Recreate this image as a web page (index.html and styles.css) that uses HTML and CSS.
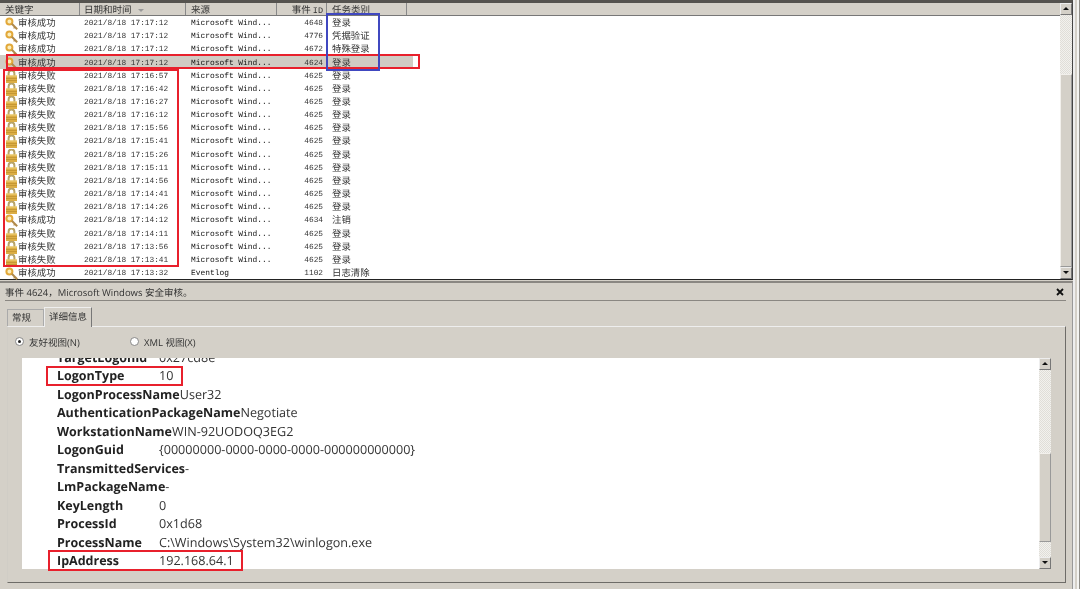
FILE: index.html
```html
<!DOCTYPE html>
<html lang="zh">
<head>
<meta charset="utf-8">
<title>事件查看器</title>
<link rel="stylesheet" href="styles.css">
</head>
<body>
<svg width="0" height="0" class="defs">
  <symbol id="key" viewBox="0 0 13 13">
    <circle cx="4.4" cy="4.4" r="3" fill="#fbeebc" stroke="#e2a83a" stroke-width="2"/>
    <path d="M6.8 6.8l5.400 5.400" stroke="#b08a4a" stroke-width="2"/>
    <path d="M10 10l-1.400 1.400" stroke="#b08a4a" stroke-width="1.200"/>
  </symbol>
  <symbol id="lock" viewBox="0 0 13 13">
    <path d="M3.600 6.500V3.400a2.900 2.900 0 0 1 5.800 0V6.500" fill="none" stroke="#b8a468" stroke-width="2"/>
    <rect x="1" y="5.500" width="11" height="7.500" fill="#dcae45"/>
    <path d="M1 6h11" stroke="#f0d47e" stroke-width="1"/>
    <path d="M1 8.500h11M1 10.500h11" stroke="#c0922f" stroke-width=".8"/>
  </symbol>
</svg>
<div class="app">
  <div class="top">
    <div class="list-pane">
      <div class="list-main">
        <div class="head">
          <div class="hc c1">关键字</div>
          <div class="hc c2">日期和时间<span class="sort"></span></div>
          <div class="hc c3">来源</div>
          <div class="hc c4">事件 <span class="mono">ID</span></div>
          <div class="hc c5">任务类别</div>
          <div class="hc c6"></div>
        </div>
        <div class="rows">
          <div class="row"><div class="k"><svg class="ic"><use href="#key"/></svg>审核成功</div><div class="d">2021/8/18 17:17:12</div><div class="s">Microsoft Wind...</div><div class="i">4648</div><div class="t">登录</div></div>
          <div class="row"><div class="k"><svg class="ic"><use href="#key"/></svg>审核成功</div><div class="d">2021/8/18 17:17:12</div><div class="s">Microsoft Wind...</div><div class="i">4776</div><div class="t">凭据验证</div></div>
          <div class="row"><div class="k"><svg class="ic"><use href="#key"/></svg>审核成功</div><div class="d">2021/8/18 17:17:12</div><div class="s">Microsoft Wind...</div><div class="i">4672</div><div class="t">特殊登录</div></div>
          <div class="row sel"><div class="k"><svg class="ic"><use href="#key"/></svg>审核成功</div><div class="d">2021/8/18 17:17:12</div><div class="s">Microsoft Wind...</div><div class="i">4624</div><div class="t">登录</div></div>
          <div class="row"><div class="k"><svg class="ic"><use href="#lock"/></svg>审核失败</div><div class="d">2021/8/18 17:16:57</div><div class="s">Microsoft Wind...</div><div class="i">4625</div><div class="t">登录</div></div>
          <div class="row"><div class="k"><svg class="ic"><use href="#lock"/></svg>审核失败</div><div class="d">2021/8/18 17:16:42</div><div class="s">Microsoft Wind...</div><div class="i">4625</div><div class="t">登录</div></div>
          <div class="row"><div class="k"><svg class="ic"><use href="#lock"/></svg>审核失败</div><div class="d">2021/8/18 17:16:27</div><div class="s">Microsoft Wind...</div><div class="i">4625</div><div class="t">登录</div></div>
          <div class="row"><div class="k"><svg class="ic"><use href="#lock"/></svg>审核失败</div><div class="d">2021/8/18 17:16:12</div><div class="s">Microsoft Wind...</div><div class="i">4625</div><div class="t">登录</div></div>
          <div class="row"><div class="k"><svg class="ic"><use href="#lock"/></svg>审核失败</div><div class="d">2021/8/18 17:15:56</div><div class="s">Microsoft Wind...</div><div class="i">4625</div><div class="t">登录</div></div>
          <div class="row"><div class="k"><svg class="ic"><use href="#lock"/></svg>审核失败</div><div class="d">2021/8/18 17:15:41</div><div class="s">Microsoft Wind...</div><div class="i">4625</div><div class="t">登录</div></div>
          <div class="row"><div class="k"><svg class="ic"><use href="#lock"/></svg>审核失败</div><div class="d">2021/8/18 17:15:26</div><div class="s">Microsoft Wind...</div><div class="i">4625</div><div class="t">登录</div></div>
          <div class="row"><div class="k"><svg class="ic"><use href="#lock"/></svg>审核失败</div><div class="d">2021/8/18 17:15:11</div><div class="s">Microsoft Wind...</div><div class="i">4625</div><div class="t">登录</div></div>
          <div class="row"><div class="k"><svg class="ic"><use href="#lock"/></svg>审核失败</div><div class="d">2021/8/18 17:14:56</div><div class="s">Microsoft Wind...</div><div class="i">4625</div><div class="t">登录</div></div>
          <div class="row"><div class="k"><svg class="ic"><use href="#lock"/></svg>审核失败</div><div class="d">2021/8/18 17:14:41</div><div class="s">Microsoft Wind...</div><div class="i">4625</div><div class="t">登录</div></div>
          <div class="row"><div class="k"><svg class="ic"><use href="#lock"/></svg>审核失败</div><div class="d">2021/8/18 17:14:26</div><div class="s">Microsoft Wind...</div><div class="i">4625</div><div class="t">登录</div></div>
          <div class="row"><div class="k"><svg class="ic"><use href="#key"/></svg>审核成功</div><div class="d">2021/8/18 17:14:12</div><div class="s">Microsoft Wind...</div><div class="i">4634</div><div class="t">注销</div></div>
          <div class="row"><div class="k"><svg class="ic"><use href="#lock"/></svg>审核失败</div><div class="d">2021/8/18 17:14:11</div><div class="s">Microsoft Wind...</div><div class="i">4625</div><div class="t">登录</div></div>
          <div class="row"><div class="k"><svg class="ic"><use href="#lock"/></svg>审核失败</div><div class="d">2021/8/18 17:13:56</div><div class="s">Microsoft Wind...</div><div class="i">4625</div><div class="t">登录</div></div>
          <div class="row"><div class="k"><svg class="ic"><use href="#lock"/></svg>审核失败</div><div class="d">2021/8/18 17:13:41</div><div class="s">Microsoft Wind...</div><div class="i">4625</div><div class="t">登录</div></div>
          <div class="row"><div class="k"><svg class="ic"><use href="#key"/></svg>审核成功</div><div class="d">2021/8/18 17:13:32</div><div class="s">Eventlog</div><div class="i">1102</div><div class="t">日志清除</div></div>
        </div>
        <div class="mark red m-row"></div>
        <div class="mark red m-fail"></div>
        <div class="mark blue m-cat"></div>
      </div>
      <div class="vbar top-bar">
        <div class="arrow up"></div>
        <div class="track t1"></div>
        <div class="thumb t2"></div>
        <div class="arrow down"></div>
      </div>
    </div>
  </div>
  <div class="bottom">
    <div class="title-row">
      <span>事件 4624，Microsoft Windows 安全审核。</span>
      <svg class="close" viewBox="0 0 8 8"><path d="M1 1l6 6M7 1l-6 6" stroke="#111" stroke-width="1.800"/></svg>
    </div>
    <div class="tabs">
      <div class="tab">常规</div>
      <div class="tab on">详细信息</div>
    </div>
    <div class="tab-body">
      <div class="radios">
        <label class="radio r1"><span class="dot on"></span>友好视图(N)</label>
        <label class="radio"><span class="dot"></span>XML 视图(X)</label>
      </div>
      <div class="detail">
        <div class="detail-text">
          <div class="clip"><b class="dk">TargetLogonId</b><span>0x27cd8e</span></div>
          <div class="dr"><b class="dk">LogonType</b><span>10</span></div>
          <div class="dr"><b>LogonProcessName</b><span>User32</span></div>
          <div class="dr"><b>AuthenticationPackageName</b><span>Negotiate</span></div>
          <div class="dr"><b>WorkstationName</b><span>WIN-92UODOQ3EG2</span></div>
          <div class="dr"><b class="dk">LogonGuid</b><span>{00000000-0000-0000-0000-000000000000}</span></div>
          <div class="dr"><b>TransmittedServices</b><span>-</span></div>
          <div class="dr"><b>LmPackageName</b><span>-</span></div>
          <div class="dr"><b class="dk">KeyLength</b><span>0</span></div>
          <div class="dr"><b class="dk">ProcessId</b><span>0x1d68</span></div>
          <div class="dr"><b class="dk">ProcessName</b><span>C:\Windows\System32\winlogon.exe</span></div>
          <div class="dr"><b class="dk">IpAddress</b><span>192.168.64.1</span></div>
        </div>
        <div class="vbar low-bar">
          <div class="arrow up"></div>
          <div class="track t3"></div>
          <div class="thumb t4"></div>
          <div class="track t5"></div>
          <div class="arrow down"></div>
        </div>
        <div class="mark red m-type"></div>
        <div class="mark red m-ip"></div>
      </div>
    </div>
  </div>
</div>
</body>
</html>
```
FILE: styles.css
```css
* { box-sizing: border-box; }
html, body { margin: 0; padding: 0; }
body { width: 1080px; height: 589px; overflow: hidden; background: #d4d0c8; font-family: "Open Sans", "Noto Sans CJK SC", "Liberation Sans", sans-serif; color: #222; }
.defs { position: absolute; }
.app { width: 1080px; height: 589px; display: flex; flex-direction: column; filter: blur(0.35px); text-rendering: geometricPrecision; background: linear-gradient(90deg, #d4d0c8 0 1073px, #eee 1073px 1075px, #d4d0c8 1075px 1077px, #f4f4f2 1077px 1079px, #8f8d88 1079px); }
.top { height: 280px; border-top: 3px solid #55534f; width: 1073px; border-right: 1px solid #444; border-bottom: 1px solid #222; background: #fff; }
.list-pane { display: flex; height: 100%; }
.list-main { position: relative; flex: 1; min-width: 0; background: #fff; }
.head { height: 13px; display: flex; background: #d4d0c8; border-bottom: 1px solid #777; font-family: "Noto Sans CJK SC", sans-serif; font-size: 9.5px; line-height: 13px; color: #333; }
.mono { font-family: "Liberation Mono", monospace; font-size: 8.5px; }
.hc { padding-left: 5px; border-right: 1px solid #888; white-space: nowrap; flex: none; }
.head .c1 { width: 80px; }
.head .c2 { width: 106px; padding-left: 4px; }
.head .c3 { width: 91px; padding-left: 5px; }
.head .c4 { width: 50px; text-align: right; padding-right: 3px; }
.head .c5 { width: 80px; }
.head .c6 { flex: 1; border-right: 0; }
.sort { display: inline-block; width: 0; height: 0; margin-left: 6px; vertical-align: 1px; border: 3px solid transparent; border-top: 3px solid #999; border-bottom: 0; }
.rows { display: flex; flex-direction: column; }
.row { height: 13.16px; display: flex; align-items: center; font-family: "Noto Sans CJK SC", sans-serif; font-size: 9.4px; line-height: 13px; white-space: nowrap; flex: none; }
.row.sel { background: #d0ccc4; margin-right: 647px; }
.k { width: 84px; display: flex; align-items: center; padding-left: 5px; color: #333; }
.ic { width: 13px; height: 13px; flex: none; margin-top: 2px; }
.d { width: 107px; padding-top: 4px; font-family: "Liberation Mono", monospace; font-size: 7.8px; color: #333; }
.s { width: 90px; padding-top: 2px; font-family: "Liberation Mono", monospace; font-size: 7.9px; color: #111; }
.i { width: 42px; padding-top: 4px; text-align: right; font-family: "Liberation Mono", monospace; font-size: 7.8px; color: #333; }
.t { margin-left: 9px; color: #333; }
.vbar { width: 12px; display: flex; flex-direction: column; flex: none; background: #e9e7e3; }
.top-bar { height: 100%; }
.arrow { height: 12px; background: #d4d0c8; border: 1px solid; border-color: #eee #777 #777 #eee; position: relative; flex: none; }
.arrow::after { content: ""; position: absolute; left: 2px; top: 3px; border: 3px solid transparent; }
.up::after { border-bottom: 3px solid #111; border-top: 0; }
.down::after { border-top: 3px solid #111; border-bottom: 0; }
.track { background: repeating-conic-gradient(#e0ded8 0 25%, #f2f1ee 0 50%) 0 0 / 2px 2px; flex: none; }
.thumb { background: #d4d0c8; border: 1px solid; border-color: #f2f0ec #999 #999 #f2f0ec; flex: none; }
.t1 { height: 59px; }
.t2 { flex: 1; }
.t3 { height: 83px; }
.t4 { height: 89px; }
.t5 { height: 15px; }
.bottom { flex: 1; display: flex; flex-direction: column; border-top: 2px solid #8a8782; margin-top: 1px; width: 1073px; padding: 0 6px 6px 7px; border-right: 1px solid #999; min-height: 0; }
.title-row { height: 18px; display: flex; justify-content: space-between; align-items: center; border-bottom: 1px solid #8a8782; font-size: 9.5px; margin: 0 0 0 -2px; color: #333; padding: 1px 2px 0 0; flex: none; }
.close { width: 8px; height: 8px; flex: none; }
.tabs { display: flex; align-items: flex-end; height: 25px; flex: none; }
.tab { height: 17px; width: 37px; padding-left: 4px; font-size: 9.5px; line-height: 16px; background: #d4d0c8; border: 1px solid #aaa; border-bottom: 0; color: #333; }
.tab.on { height: 20px; width: 48px; line-height: 18px; border-color: #eee #777 #d4d0c8 #eee; margin-bottom: -1px; position: relative; }
.tab-body { flex: 1; display: flex; flex-direction: column; border: 1px solid; border-color: #eee #6e6c68 #6e6c68 #d0cdc6; min-height: 0; padding-left: 14px; }
.radios { height: 31px; padding-bottom: 2px; display: flex; align-items: center; font-size: 9.5px; margin-left: -7px; color: #333; flex: none; }
.radio { display: flex; align-items: center; gap: 5px; }
.r1 { width: 115px; }
.dot { width: 9px; height: 9px; border-radius: 50%; background: #fff; border: 1px solid #888; position: relative; }
.dot.on::after { content: ""; position: absolute; left: 2px; top: 2px; width: 3px; height: 3px; background: #222; border-radius: 50%; }
.detail { position: relative; height: 211px; display: flex; flex: none; margin-right: 14px; }
.detail-text { flex: 1; background: #fff; overflow: hidden; padding-left: 35px; font-family: "Open Sans", "Liberation Sans", sans-serif; font-size: 12.6px; color: #333; }
.clip { height: 9px; display: flex; align-items: flex-end; line-height: 18px; overflow: hidden; }
.dr { height: 18.5px; display: flex; align-items: center; line-height: 18px; white-space: nowrap; }
.detail-text b { font-weight: 700; font-size: 12.5px; color: #222; }
.detail-text b.dk { display: inline-block; width: 102px; flex: none; }
.low-bar { height: 100%; }
.mark { position: absolute; pointer-events: none; border: 2px solid; }
.red { border-color: #e8202c; }
.blue { border-color: #4048c0; }
.m-row { left: 6px; top: 51px; width: 414px; height: 15px; }
.m-fail { left: 3px; top: 66px; width: 176px; height: 198px; }
.m-cat { left: 326px; top: 10px; width: 54px; height: 58px; }
.m-type { left: 24px; top: 8px; width: 137px; height: 20px; }
.m-ip { left: 26px; top: 192px; width: 195px; height: 21px; }
```
